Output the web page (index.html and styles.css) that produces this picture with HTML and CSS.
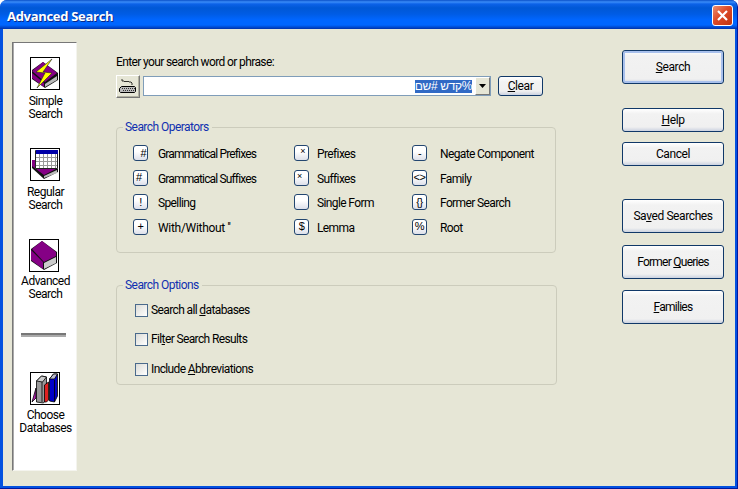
FILE: index.html
```html
<!DOCTYPE html>
<html lang="en">
<head>
<meta charset="utf-8">
<title>Advanced Search</title>
<link rel="stylesheet" href="styles.css">
</head>
<body>
<div class="window">
  <header class="titlebar">
    <h1>Advanced Search</h1>
    <button class="close" aria-label="Close"><svg width="19" height="19" viewBox="0 0 19 19"><path d="M5 5l9 9M14 5l-9 9" stroke="#fff" stroke-width="2.2"/></svg></button>
  </header>
  <div class="client">
    <nav class="sidebar">
      <a class="nav simple">
        <svg width="30" height="33" viewBox="0 0 30 33"><rect x=".5" y=".5" width="29" height="32" fill="#fff" stroke="#000"/><path d="M2 13L13 5l15 11v7l-13 8L2 22z" fill="#111"/><path d="M2 14L13 5l14 11-12 9z" fill="#850085"/><path d="M2 16l12 10v4L2 21z" fill="#850085"/><path d="M15 27l12-8v4l-12 7z" fill="#bbb"/><path d="M22 2L6 15l9 1-8 15 15-15-9-1z" fill="#ff0" stroke="#222" stroke-width=".6"/></svg>
        <span>Simple<br>Search</span>
      </a>
      <a class="nav regular">
        <svg width="30" height="33" viewBox="0 0 30 33"><rect x=".5" y=".5" width="29" height="32" fill="#fff" stroke="#000"/><path d="M2 12h5l21 9v3l-14 7L2 20z" fill="#111"/><path d="M2 12h5l19 9-12 6L2 18z" fill="#850085"/><path d="M14 28l13-6v3l-13 5z" fill="#bbb"/><path d="M5.500 2.500h22v18h-22z" fill="#fff" stroke="#222"/><path d="M6 2h22v4H6z" fill="#0000a8"/><path d="M9.500 6v14M13.500 6v14M17.500 6v14M21.500 6v14M25.500 6v14M6 9.500h21M6 13.500h21M6 17.500h21" stroke="#999"/></svg>
        <span>Regular<br>Search</span>
      </a>
      <a class="nav advanced">
        <svg width="30" height="33" viewBox="0 0 30 33"><rect x=".5" y=".5" width="29" height="32" fill="#fff" stroke="#000"/><path d="M2 10L13 2l15 11v11l-13 7L2 22z" fill="#111"/><path d="M3 10l10-8 14 11v4l-12 6z" fill="#850085"/><path d="M2 11l12 12v7L2 21z" fill="#850085"/><path d="M15 24l12-6v6l-12 6z" fill="#ccc"/></svg>
        <span>Advanced<br>Search</span>
      </a>
      <hr>
      <a class="nav choose">
        <svg width="30" height="33" viewBox="0 0 30 33"><rect x=".5" y=".5" width="29" height="32" fill="#fff" stroke="#000"/><g stroke="#000" stroke-width=".8"><path d="M2 30l4-14v10z" fill="#b020b0"/><path d="M6.500 9l5-5 5 1v22l-3 4-7-1z" fill="#999"/><path d="M6.500 9l5-5 5 1-4 5z" fill="#ccc"/><path d="M12 10v20"/><path d="M14.500 13l4-3v18l-2 2h-2z" fill="#e02020"/><path d="M19.500 7l4-5h4v22l-3 6-5-1z" fill="#0000c8"/><path d="M19.500 7l4-5h4l-3 5z" fill="#bbc"/><path d="M24.500 8v22"/></g></svg>
        <span>Choose<br>Databases</span>
      </a>
    </nav>
    <main>
      <label class="prompt">Enter your search word or phrase:</label>
      <div class="query">
        <button class="kbd" aria-label="Keyboard"><svg width="18" height="18" viewBox="0 0 18 18"><path d="M3 1v2h2l1 1 1-1 1 1 1-1 1 1h2l1 1v2" fill="none" stroke="#000" stroke-width=".8"/><path d="M2.500 8.500h13l1 1v4l-1 1h-14l-1-1v-3z" fill="#bbb" stroke="#000"/><path d="M3 10.500h13M4 12.500h11" stroke="#333" stroke-dasharray="1 1"/></svg></button>
        <div class="combo"><span class="sel" dir="rtl" lang="he">%קדש #שם</span><span class="drop"><svg width="7" height="4" viewBox="0 0 7 4"><path d="M0 0h7L3.500 4z"/></svg></span></div>
        <button class="btn clear"><span><u>C</u>lear</span></button>
      </div>
      <section class="group operators">
        <h2>Search Operators</h2>
        <div class="ops">
          <button class="key right">#</button><span class="tight">Grammatical Prefixes</span>
          <button class="key right star">×</button><span>Prefixes</span>
          <button class="key">-</button><span>Negate Component</span>
          <button class="key left">#</button><span class="tight">Grammatical Suffixes</span>
          <button class="key left star">×</button><span>Suffixes</span>
          <button class="key">&lt;&gt;</button><span>Family</span>
          <button class="key">!</button><span>Spelling</span>
          <button class="key"></button><span>Single Form</span>
          <button class="key">{}</button><span>Former Search</span>
          <button class="key">+</button><span class="loose">With/Without ''</span>
          <button class="key">$</button><span>Lemma</span>
          <button class="key">%</button><span>Root</span>
        </div>
      </section>
      <section class="group options">
        <h2>Search Options</h2>
        <div class="checks">
          <label><i class="box"></i><span>Search all <u>d</u>atabases</span></label>
          <label><i class="box"></i><span>Fil<u>t</u>er Search Results</span></label>
          <label><i class="box"></i><span>Include <u>A</u>bbreviations</span></label>
        </div>
      </section>
    </main>
    <aside class="actions">
      <button class="btn tall default"><span><u>S</u>earch</span></button>
      <button class="btn help"><span><u>H</u>elp</span></button>
      <button class="btn cancel"><span>Cancel</span></button>
      <button class="btn tall saved"><span>Sa<u>v</u>ed Searches</span></button>
      <button class="btn tall former"><span>Former <u>Q</u>ueries</span></button>
      <button class="btn tall families"><span><u>F</u>amilies</span></button>
    </aside>
  </div>
</div>
</body>
</html>
```
FILE: styles.css
```css
* { box-sizing: border-box; }
body {
  margin: 0;
  background: #fff;
  font: 12px/14px Roboto, "Liberation Sans", sans-serif;
  letter-spacing: -0.62px;
  color: #000;
}
button { font: inherit; letter-spacing: inherit; color: inherit; padding: 0; margin: 0; }
u { text-decoration: underline; text-underline-offset: 1px; text-decoration-skip-ink: none; }
.window {
  width: 738px;
  height: 489px;
  background: #0351e0;
  border-right: 1px solid #0018a0;
  border-bottom: 1px solid #0018a0;
  border-radius: 7px 7px 0 0;
  overflow: hidden;
  display: flex;
  flex-direction: column;
}
.titlebar {
  height: 29px;
  flex: none;
  display: flex;
  align-items: center;
  justify-content: space-between;
  padding: 2px 4px 0 7px;
  background: linear-gradient(#0a50c8 0, #3a8cf8 2px, #0c62e8 4px, #0058d6 8px, #005ce4 14px, #0066ff 20px, #0066ff 25px, #0040c0 28px, #0030a8 29px);
}
h1 {
  margin: 0;
  padding-top: 1px;
  font: bold 13px/18px "Open Sans", sans-serif;
  letter-spacing: -0.3px;
  color: #fff;
  text-shadow: 1px 1px #0a2a88;
}
.close {
  width: 21px;
  height: 21px;
  border: 1px solid #fff;
  border-radius: 3px;
  background: linear-gradient(135deg, #ee9070, #dd4a28 45%, #c03410);
}
.close svg { display: block; }
.client {
  height: 457px;
  margin: 0 2px 0 3px;
  background: #e6e6d6;
  display: flex;
  align-items: flex-start;
  padding-left: 9px;
}
.sidebar {
  margin-top: 13px;
  width: 65px;
  height: 429px;
  background: #fff;
  border-top: 1px solid #777;
  border-left: 1px solid #777;
  border-right: 1px solid #f4f4ee;
  border-bottom: 1px solid #f4f4ee;
  box-shadow: inset 1px 0 #aaa;
  display: flex;
  flex-direction: column;
  align-items: center;
  letter-spacing: -0.5px;
}
.nav { display: flex; flex-direction: column; align-items: center; text-align: center; line-height: 13px; }
.nav svg { display: block; margin-bottom: 5px; }
.nav span { white-space: nowrap; margin-left: 2px; }
.simple { margin-top: 14px; }
.regular { margin-top: 27px; }
.advanced { margin-top: 27px; }
.advanced svg { margin-bottom: 3px; }
.sidebar hr { width: 45px; height: 4px; margin: 32px 2px 35px 0; border: 0; border-top: 2px solid #777; background: #aaa; }
.choose svg { margin-bottom: 4px; }
main { width: 441px; margin-left: 39px; padding-top: 26px; }
.prompt { display: block; height: 14px; white-space: nowrap; }
.query { display: flex; align-items: flex-start; margin-top: 6px; height: 24px; }
.kbd {
  width: 24px;
  height: 23px;
  background: #e6e6d6;
  border: 1px solid;
  border-color: #fff #777 #777 #fff;
  box-shadow: inset -1px -1px #b0b0a0;
  display: grid;
  place-items: center;
}
.combo {
  width: 348px;
  height: 20px;
  margin: 1px 0 0 3px;
  background: #fff;
  border: 1px solid #7f9db9;
  display: flex;
  justify-content: flex-end;
  align-items: center;
}
.sel {
  background: #316ac5;
  color: #fff;
  font: 12px/13px "Liberation Sans", sans-serif;
  height: 13px;
  min-width: 57px;
  letter-spacing: -0.35px;
  white-space: nowrap;
  text-align: center;
  margin-right: 3px;
}
.drop {
  width: 15px;
  height: 18px;
  background: #e6e6d6;
  border: 1px solid;
  border-color: #fff #777 #777 #fff;
  display: grid;
  place-items: center;
}
.btn {
  border: 1px solid #103868;
  border-radius: 3px;
  background: linear-gradient(#fff, #f2f2f2 5px, #f0f0f0 calc(100% - 4px), #cbd2e0);
  display: flex;
  align-items: center;
  justify-content: center;
  width: 102px;
  height: 24px;
}
.clear { width: 45px; height: 20px; margin: 1px 0 0 7px; letter-spacing: -0.4px; }
.group { position: relative; border: 1px solid #ccccbc; border-radius: 4px; }
.group h2 {
  position: absolute;
  left: 6px;
  top: -8px;
  margin: 0;
  padding: 0 3px 0 2px;
  background: #e6e6d6;
  color: #1030b0;
  font-size: 12px;
  font-weight: 400;
  line-height: 14px;
  letter-spacing: -0.55px;
  white-space: nowrap;
}
.operators { width: 440px; height: 126px; margin-top: 28px; padding: 13px 0 0 16px; }
.ops { display: grid; grid-template-columns: 25px 136px 23px 95px 28px 110px; grid-auto-rows: 24.5px; align-items: center; white-space: nowrap; }
.ops span { padding-top: 2px; }
.tight { letter-spacing: -0.85px; }
.loose { letter-spacing: -0.3px; }
.key {
  width: 15px;
  height: 16px;
  border: 1px solid #234670;
  border-radius: 3px;
  background: linear-gradient(#fff 40%, #dde0ea);
  font: 11px/13px "Liberation Sans", sans-serif;
  letter-spacing: -0.5px;
  display: flex;
  justify-content: center;
  align-items: center;
}
.left { justify-content: flex-start; padding-left: 2px; }
.right { justify-content: flex-end; padding-right: 1px; }
.star { font-size: 9px; padding-bottom: 3px; }
.right.star { padding-right: 3px; }
.options { width: 441px; height: 100px; margin-top: 32px; padding: 14px 0 0 18px; }
.checks { display: grid; grid-template-rows: 29px 30px 29px; }
.checks label { display: flex; align-items: center; height: 20px; gap: 3px; white-space: nowrap; }
.box { width: 13px; height: 13px; border: 1px solid #4a6a8c; background: linear-gradient(135deg, #dcdcd7, #fff); }
.actions { width: 102px; margin-left: 65px; padding-top: 21px; letter-spacing: -0.4px; }
.tall { height: 34px; }
.default { box-shadow: inset 0 0 0 2px #a8c0ec; }
.help { margin-top: 24px; }
.cancel { margin-top: 10px; }
.saved { margin-top: 33px; }
.former { margin-top: 12px; letter-spacing: -0.75px; }
.families { margin-top: 11px; letter-spacing: -0.75px; }
```
